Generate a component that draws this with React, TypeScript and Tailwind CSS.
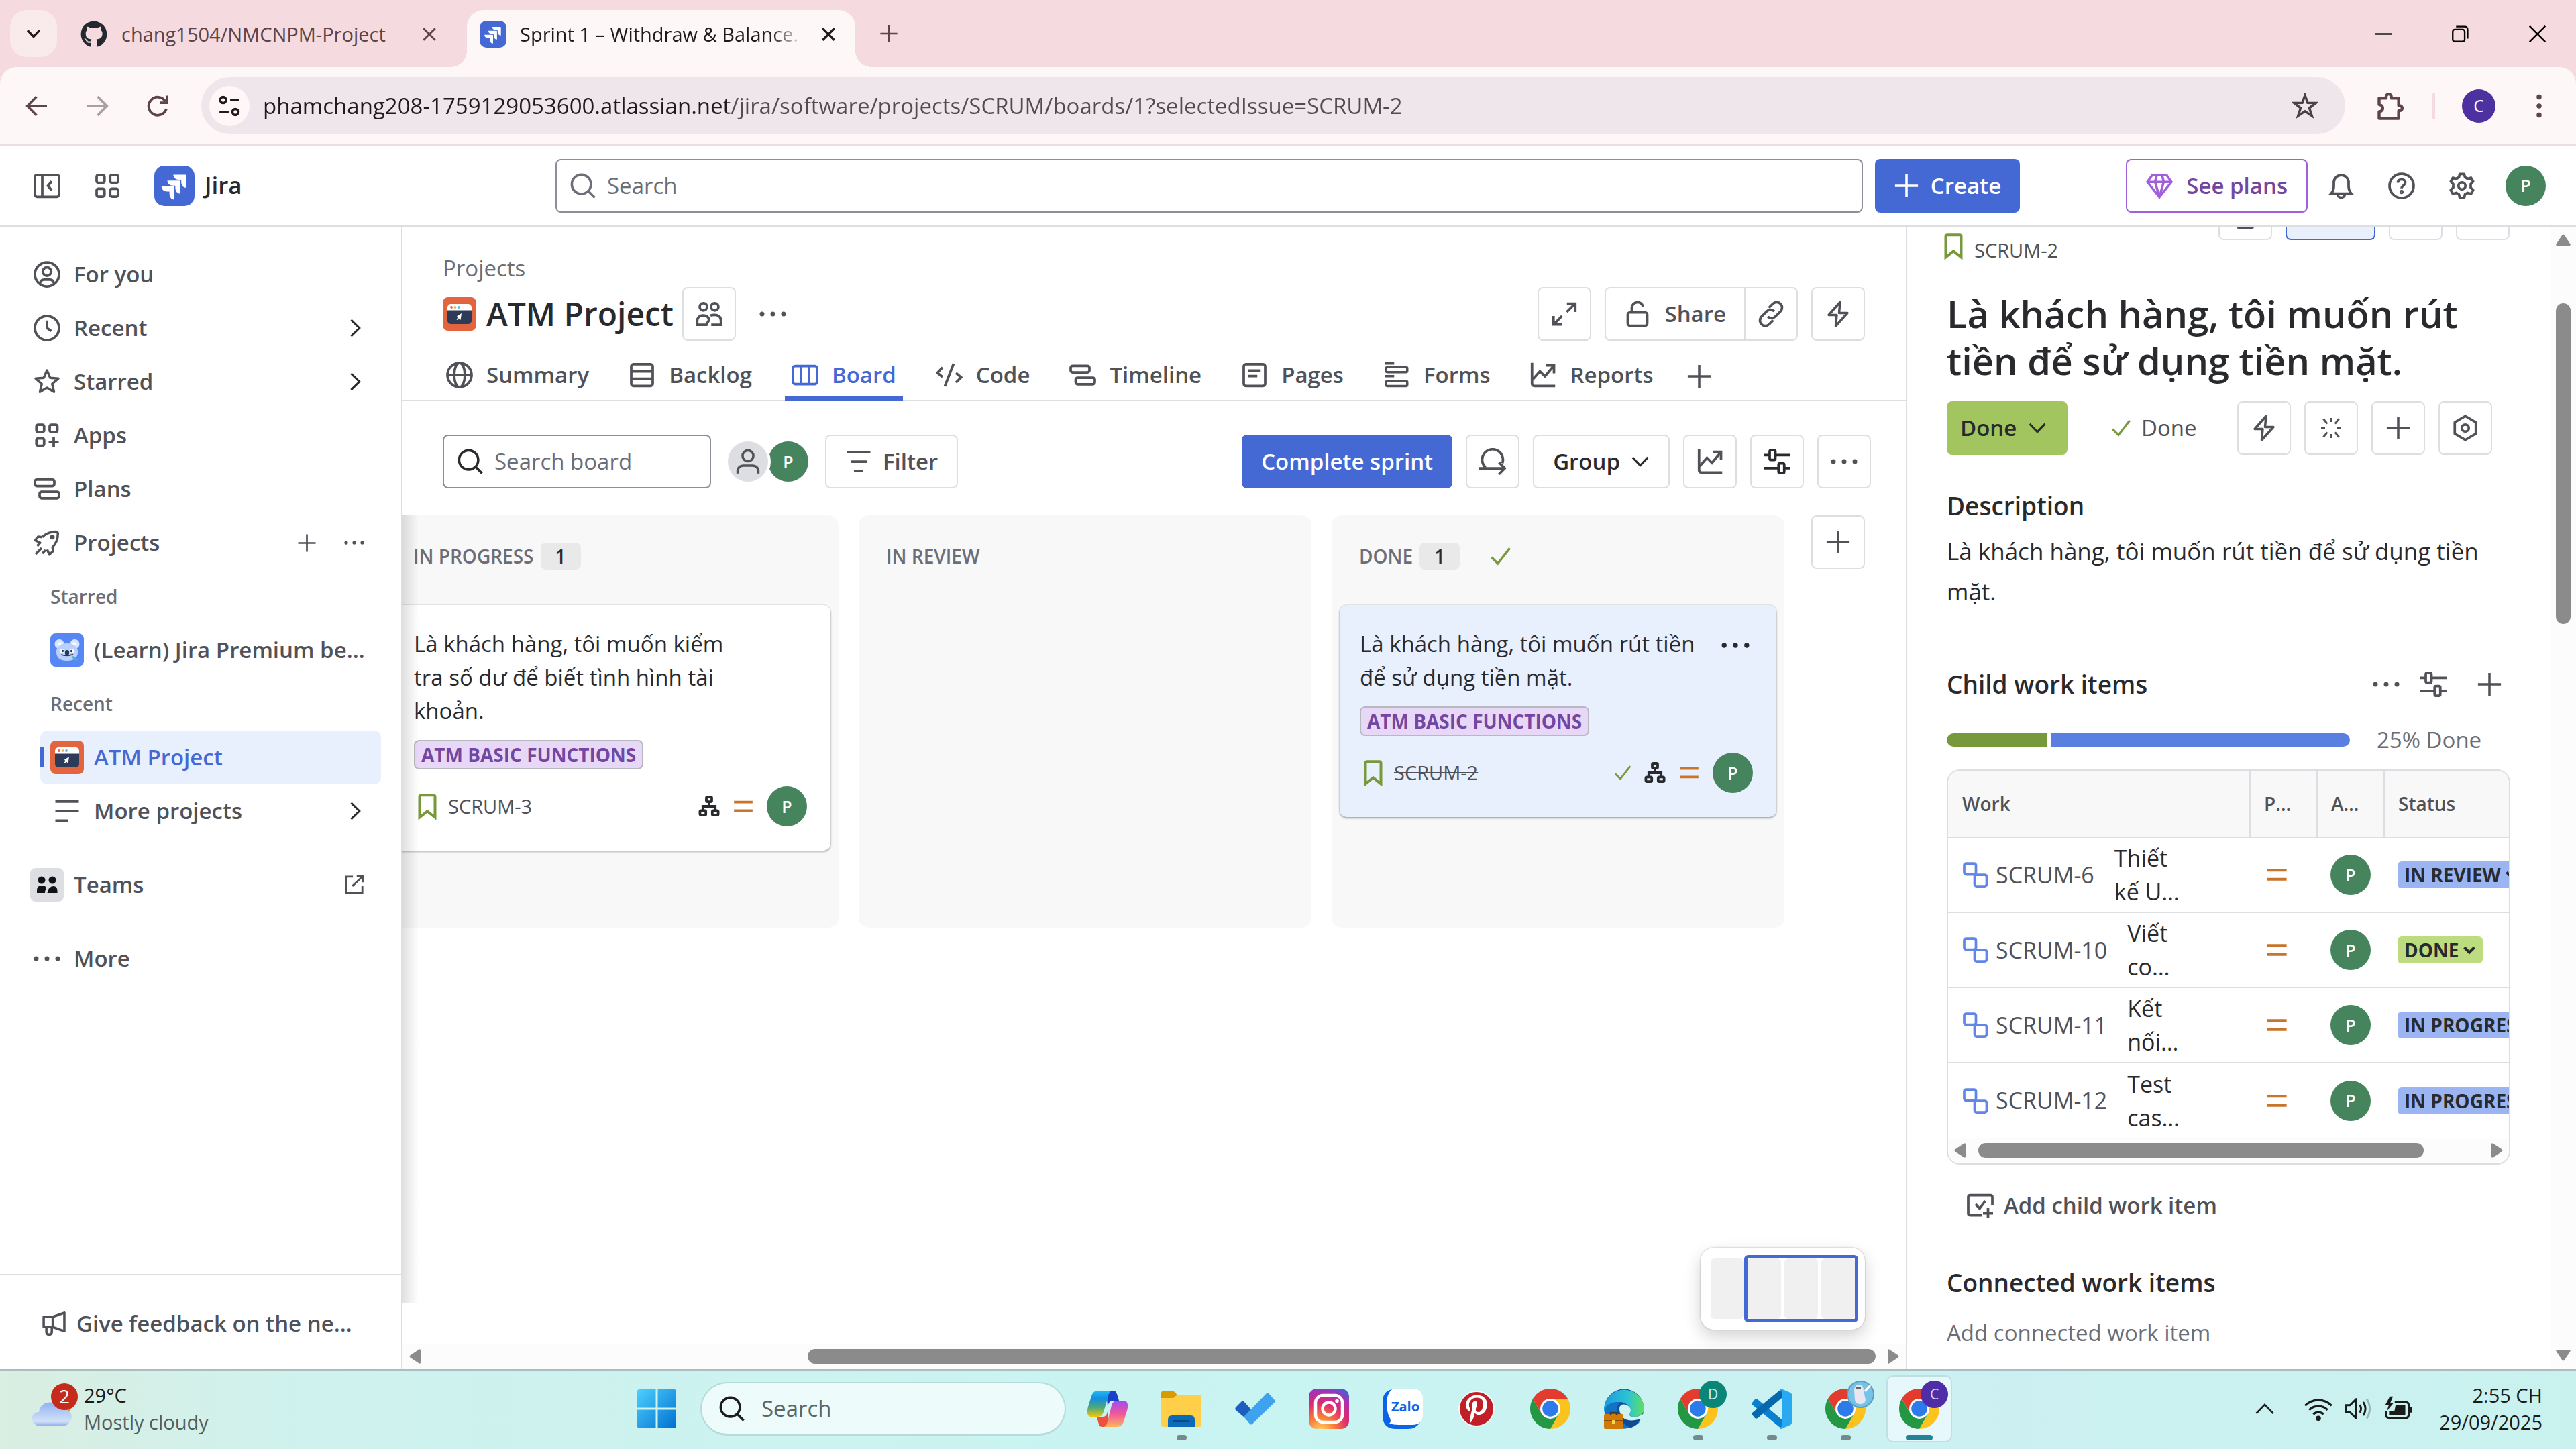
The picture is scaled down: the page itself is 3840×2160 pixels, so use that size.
import React from "react";
import { FaGithub, FaPinterestP } from "react-icons/fa";

type IconProps = { className?: string; children: React.ReactNode; sw?: number };

function Icon({ className = "size-[40px]", children, sw = 1.5 }: IconProps) {
  return (
    <svg viewBox="0 0 16 16" className={`shrink-0 ${className}`} fill="none" stroke="currentColor" strokeWidth={sw} aria-hidden="true">
      {children}
    </svg>
  );
}

const Plus = ({ className }: { className?: string }) => (
  <Icon className={className}><path d="M8 .8v14.4M.8 8h14.4" /></Icon>
);
const Dots = ({ className }: { className?: string }) => (
  <svg viewBox="0 0 16 16" className={`shrink-0 ${className ?? "size-[40px]"}`} fill="currentColor" aria-hidden="true">
    <circle cx="1.6" cy="8" r="1.4" /><circle cx="8" cy="8" r="1.4" /><circle cx="14.4" cy="8" r="1.4" />
  </svg>
);
const Chevron = ({ className }: { className?: string }) => (
  <Icon className={className} sw={1.6}><path d="m5 1.5 6.6 6.5L5 14.5" /></Icon>
);
const ChevronDown = ({ className, sw = 1.7 }: { className?: string; sw?: number }) => (
  <Icon className={className} sw={sw}><path d="m1.5 4.5 6.5 6.8 6.5-6.8" /></Icon>
);
const Check = ({ className }: { className?: string }) => (
  <Icon className={className} sw={1.6}><path d="M1.6 8.8 6 13.2 14.4 2.4" /></Icon>
);
const Search = ({ className }: { className?: string }) => (
  <Icon className={className}><circle cx="7" cy="7" r="6" /><path d="m11.2 11.2 4.2 4.2" /></Icon>
);
const Bolt = () => (
  <Icon sw={1.4}><path d="M9.2.9 2.4 8.6h4.8l-.6 6.6L13.6 7.4H8.6z" strokeLinejoin="round" /></Icon>
);
const Sliders = () => (
  <Icon><path d="M0 4.1h3.6M7.4 4.1H16M0 11.9h8.6M12.4 11.9H16" /><rect x="3.6" y="1.2" width="3.4" height="5.8" rx=".8" /><rect x="8.9" y="9" width="3.4" height="5.8" rx=".8" /></Icon>
);
const ChartLine = () => (
  <Icon><path d="M1.5.7v12.3c0 .9.6 1.5 1.5 1.5h12.3M1.8 10.8l4.4-5 3 3 5-6M10 2.2h4.6v4.8" /></Icon>
);
const Equals = ({ className }: { className?: string }) => (
  <Icon className={className} sw={1.7}><path d="M1.5 5h13M1.5 11h13" /></Icon>
);
const Bookmark = () => (
  <Icon className="size-[40px] text-[#77983b]" sw={1.6}><path d="M3.4 14.6V2.2c0-.5.4-.9.9-.9h7.4c.5 0 .9.4.9.9v12.4L8 10.9z" /></Icon>
);
const Tree = () => (
  <Icon className="size-[32px] text-[#292a2e]" sw={1.9}>
    <rect x="6" y="1" width="4" height="3.6" rx=".8" /><rect x="1.2" y="11.2" width="4.4" height="3.4" rx=".8" /><rect x="10.4" y="11.2" width="4.4" height="3.4" rx=".8" /><path d="M8 4.6v3.2M3.4 11V8h9.2v3" />
  </Icon>
);
const Subtask = () => (
  <Icon className="size-[40px] text-[#6087e8]">
    <rect x="1.2" y="1.2" width="7" height="6.6" rx="1.2" /><rect x="7.4" y="8" width="7.2" height="6.8" rx="1.2" />
  </Icon>
);

function JiraLogo({ className }: { className: string }) {
  return (
    <svg viewBox="0 0 24 24" className={`shrink-0 ${className}`} aria-hidden="true">
      <rect width="24" height="24" rx="6" fill="#4569d4" />
      <path fill="#fff" d="M9.051 15.434H7.734c-1.988 0-3.413-1.218-3.413-3h7.085c.367 0 .605.26.605.63v7.13c-1.772 0-2.96-1.435-2.96-3.434zm3.5-3.543h-1.318c-1.987 0-3.413-1.196-3.413-2.978h7.085c.367 0 .627.239.627.608v7.13c-1.772 0-2.981-1.435-2.981-3.434zm3.52-3.522h-1.317c-1.987 0-3.413-1.217-3.413-3h7.085c.367 0 .605.262.605.61v7.129c-1.771 0-2.96-1.435-2.96-3.434z" />
    </svg>
  );
}

function AtmLogo() {
  return (
    <svg viewBox="0 0 50 50" className="size-[50px] shrink-0" aria-hidden="true">
      <rect width="50" height="50" rx="8" fill="#e2653f" />
      <rect x="7" y="10" width="36" height="30" rx="5" fill="#2e3b58" />
      <path d="M7 19.5v-4.5a5 5 0 0 1 5-5h26a5 5 0 0 1 5 5v4.5z" fill="#fff" />
      <circle cx="13" cy="15" r="1.9" fill="#e2653f" /><circle cx="18.5" cy="15" r="1.9" fill="#f3b640" /><circle cx="24" cy="15" r="1.9" fill="#5fb8dc" />
      <path d="m28 24-1.5 10-2.5-2.5-2.5 2.5-1-1 2-2.5-1.5-2z" fill="#fff" />
    </svg>
  );
}

function KoalaLogo() {
  return (
    <svg viewBox="0 0 50 50" className="size-[50px] shrink-0" aria-hidden="true">
      <rect width="50" height="50" rx="8" fill="#5687f5" />
      <circle cx="13.5" cy="16" r="7" fill="#d7e5fd" /><circle cx="36.5" cy="16" r="7" fill="#d7e5fd" />
      <circle cx="14.5" cy="17" r="3.5" fill="#fff" /><circle cx="35.5" cy="17" r="3.5" fill="#fff" />
      <path d="M9 28c0-9 6-13 16-13s16 4 16 13-6 13-16 13S9 37 9 28z" fill="#b9d1fa" />
      <circle cx="18" cy="26.5" r="3.2" fill="#fff" /><circle cx="32" cy="26.5" r="3.2" fill="#fff" />
      <circle cx="18.5" cy="26.5" r="1.7" fill="#253858" /><circle cx="31.5" cy="26.5" r="1.7" fill="#253858" />
      <rect x="22" y="25" width="6" height="8" rx="3" fill="#253858" />
      <path d="M16 32q9 3 18-.5" stroke="#253858" strokeWidth="1.5" fill="none" />
      <path d="M32 34q7 0 9 7-7 0-9-7z" fill="#45b5c4" />
    </svg>
  );
}

function Avatar({ className = "" }: { className?: string }) {
  return (
    <span className={`flex size-[60px] shrink-0 items-center justify-center rounded-full bg-[#46845d] text-[25px] leading-none font-semibold text-white ${className}`}>P</span>
  );
}

function Arrow({ dir }: { dir: "left" | "right" | "up" | "down" }) {
  const d = {
    left: "M18 3v18q0 3-3 1L3 14q-3-2 0-4L15 2q3-2 3 1z",
    right: "M6 3v18q0 3 3 1l12-8q3-2 0-4L9 2Q6 0 6 3z",
    up: "M3 20h18q3 0 1-3L14 5q-2-3-4 0L2 17q-2 3 1 3z",
    down: "M3 4h18q3 0 1 3l-8 12q-2 3-4 0L2 7Q0 4 3 4z",
  }[dir];
  return (
    <svg viewBox="0 0 24 24" className="size-[24px] shrink-0" fill="#8b8b8b" aria-hidden="true"><path d={d} /></svg>
  );
}

function SquareButton({ label, children, className = "text-[#505258]" }: { label: string; children: React.ReactNode; className?: string }) {
  return (
    <button aria-label={label} className={`flex size-[80px] shrink-0 items-center justify-center rounded-[8px] border-2 border-[#dddee1] bg-white ${className}`}>
      {children}
    </button>
  );
}

function BrowserChrome() {
  return (
    <div className="bg-[#f5dadf]">
      <div className="flex h-[100px] items-stretch">
        <button aria-label="Search tabs" className="mt-[15px] ml-[15px] flex size-[70px] items-center justify-center rounded-[25px] bg-[#f9ebec] text-[#201a1b]">
          <ChevronDown className="size-[22px]" sw={2.4} />
        </button>
        <div className="flex w-[601px] items-center pt-[2px] pl-[35px] text-[29px] text-[#5c4448]">
          <FaGithub className="size-[40px] shrink-0 text-[#24292f]" />
          <span className="ml-[21px] flex-1 whitespace-nowrap">chang1504/NMCNPM-Project</span>
          <button aria-label="Close tab" className="mr-[36px]"><Icon className="size-[20px]" sw={2.2}><path d="m1 1 14 14M15 1 1 15" /></Icon></button>
        </div>
        <div className="relative ml-[10px] mt-[15px] flex w-[579px] items-center rounded-t-[25px] bg-[#fdf7f7] pb-[13px] pl-[19px] text-[29px] text-[#201a1b]">
          <span className="absolute bottom-0 -left-[25px] size-[25px] bg-[radial-gradient(circle_at_0_0,transparent_25px,#fdf7f7_25px)]" />
          <span className="absolute -right-[25px] bottom-0 size-[25px] bg-[radial-gradient(circle_at_100%_0,transparent_25px,#fdf7f7_25px)]" />
          <JiraLogo className="size-[40px]" />
          <span className="ml-[20px] w-[424px] whitespace-nowrap [mask-image:linear-gradient(90deg,#000_88%,transparent)]">Sprint 1 – Withdraw &amp; Balance.</span>
          <button aria-label="Close tab" className="ml-[26px]"><Icon className="size-[20px]" sw={2.6}><path d="m1 1 14 14M15 1 1 15" /></Icon></button>
        </div>
        <button aria-label="New tab" className="ml-[36px] text-[#5c4448]"><Plus className="size-[28px]" /></button>
        <div className="ml-auto flex text-black">
          <button aria-label="Minimize" className="flex w-[115px] items-center justify-center"><Icon className="size-[25px]"><path d="M0 8h16" /></Icon></button>
          <button aria-label="Restore" className="flex w-[115px] items-center justify-center"><Icon className="size-[25px]"><rect x=".8" y="3.8" width="11.4" height="11.4" rx="2" /><path d="M4 1h8q3 0 3 3v8.5" /></Icon></button>
          <button aria-label="Close" className="flex w-[115px] items-center justify-center"><Icon className="size-[25px]"><path d="m.5.5 15 15M15.5.5l-15 15" /></Icon></button>
        </div>
      </div>
      <div className="flex h-[117px] items-center rounded-t-[25px] border-b-2 border-[#eedde0] bg-[#fdf7f7] pl-[35px] text-[#5c4448]">
        <button aria-label="Back"><Icon sw={1.4}><path d="M14 8H2.5M7.8 2.4 2.3 8l5.5 5.6" /></Icon></button>
        <button aria-label="Forward" className="ml-[50px] text-[#ab9fa1]"><Icon sw={1.4}><path d="M2 8h11.5M8.2 2.4 13.7 8l-5.5 5.6" /></Icon></button>
        <button aria-label="Reload" className="ml-[50px]"><Icon sw={1.5}><path d="M13.2 9.7A5.4 5.4 0 1 1 12.6 5.2M13.6 1.8v4.2H9.4" /></Icon></button>
        <div className="ml-[45px] flex h-[85px] flex-1 items-center rounded-full bg-[#eee6eb] pr-[40px] pl-[12px]">
          <button aria-label="Site information" className="flex size-[60px] shrink-0 items-center justify-center rounded-full bg-[#fdf7f7] text-[#201a1b]">
            <Icon className="size-[34px]" sw={1.7}><circle cx="3.6" cy="3.8" r="2.1" /><path d="M8.5 3.8H15" /><circle cx="12.2" cy="12.2" r="2.1" /><path d="M1 12.2h6.5" /></Icon>
          </button>
          <input
            aria-label="Address"
            defaultValue="phamchang208-1759129053600.atlassian.net/jira/software/projects/SCRUM/boards/1?selectedIssue=SCRUM-2"
            className="ml-[20px] min-w-0 flex-1 bg-[linear-gradient(90deg,#201a1b_692px,#554b4e_692px)] bg-clip-text text-[33px] text-transparent outline-none"
          />
          <button aria-label="Bookmark this page" className="text-[#4c4043]"><Icon sw={1.4}><path d="m8 1.6 1.6 4.5 4.9.1-3.9 3 1.5 4.7L8 11.1l-4.1 2.8 1.5-4.7-3.9-3 4.9-.1z" /></Icon></button>
        </div>
        <button aria-label="Extensions" className="ml-[45px]"><Icon className="size-[44px]" sw={1.6}><path d="M2 3.7h3.8v-.8a1.4 1.4 0 0 1 2.8 0v.8h4v4.1h.5a1.4 1.4 0 0 1 0 2.8h-.5v4.1H2v-3.6c2.6-.4 2.6-3.5 0-3.9z" strokeLinejoin="round" /></Icon></button>
        <span className="ml-[41px] h-[40px] w-[4px] rounded bg-[#f5dadf]" />
        <button className="ml-[40px] flex size-[50px] items-center justify-center rounded-full bg-[#4d31a0] text-[25px] text-white">C</button>
        <button aria-label="Menu" className="mr-[35px] ml-[45px]">
          <svg viewBox="0 0 16 16" className="size-[40px]" fill="currentColor"><circle cx="8" cy="2.6" r="1.5" /><circle cx="8" cy="8" r="1.5" /><circle cx="8" cy="13.4" r="1.5" /></svg>
        </button>
      </div>
    </div>
  );
}

function TopBar() {
  return (
    <header className="flex h-[121px] items-center border-b-2 border-[#dddee1] text-[33px] text-[#505258]">
      <div className="flex w-[828px] shrink-0 items-center pl-[50px]">
        <button aria-label="Collapse sidebar"><Icon><rect x=".75" y="1.5" width="14.5" height="13" rx="1.3" /><path d="M5.2 1.5v13M10.8 5.3 8.6 8l2.2 2.7" /></Icon></button>
        <button aria-label="Switch apps" className="ml-[50px]"><Icon><rect x="1.6" y="1.5" width="4.7" height="4.7" rx="1" /><rect x="9.7" y="1.5" width="4.7" height="4.7" rx="1" /><rect x="1.6" y="9.7" width="4.7" height="4.7" rx="1" /><rect x="9.7" y="9.7" width="4.7" height="4.7" rx="1" /></Icon></button>
        <a href="#home" className="ml-[50px] flex items-center gap-[15px] text-[35px] font-semibold text-[#292a2e]"><JiraLogo className="size-[60px]" />Jira</a>
      </div>
      <label className="flex h-[80px] flex-1 items-center rounded-[8px] border-2 border-[#8c8f97] pl-[20px] text-[#6b6e76]">
        <Search className="size-[38px]" />
        <input aria-label="Search" placeholder="Search" className="ml-[17px] min-w-0 flex-1 outline-none placeholder:text-[#6b6e76]" />
      </label>
      <button className="ml-[18px] flex h-[80px] w-[216px] items-center justify-center gap-[17px] rounded-[8px] bg-[#4569d4] font-semibold text-white"><Plus className="size-[38px]" />Create</button>
      <div className="flex w-[829px] shrink-0 items-center justify-end pr-[45px]">
        <button className="mr-[30px] flex h-[80px] items-center gap-[20px] rounded-[8px] border-2 border-[#a25fdc] px-[28px] font-semibold text-[#74479f]">
          <Icon className="size-[40px] text-[#a25fdc]" sw={1.4}><path d="M3.8 1.5h8.4l3 4.2L8 14.7.8 5.7zM.8 5.7h14.4M5.4 5.7 8 14.5l2.6-8.8M5.4 5.7l1-4M10.6 5.7l-1-4" /></Icon>
          See plans
        </button>
        <button aria-label="Notifications"><Icon><path d="M2 12.6c.9-1 1.6-2.4 1.6-4.3V6a4.4 4.4 0 0 1 8.8 0v2.3c0 1.9.7 3.3 1.6 4.3zM5.8 12.8a2.2 2.2 0 0 0 4.4 0" /></Icon></button>
        <button aria-label="Help" className="ml-[50px]"><Icon><circle cx="8" cy="8" r="7.2" /><path d="M5.8 6.2c0-1.3 1-2.1 2.2-2.1s2.2.8 2.2 2c0 1.7-2.2 1.7-2.2 3.4" /><circle cx="8" cy="11.6" r=".5" /></Icon></button>
        <button aria-label="Settings" className="ml-[50px]"><Icon><path d="M6.7.9h2.6l.5 2 1.6.9 2-.6 1.3 2.3-1.5 1.4v2.2l1.5 1.4-1.3 2.3-2-.6-1.6.9-.5 2H6.7l-.5-2-1.6-.9-2 .6-1.3-2.3 1.5-1.4V6.9L1.3 5.5l1.3-2.3 2 .6 1.6-.9z" strokeLinejoin="round" /><circle cx="8" cy="8" r="2.1" /></Icon></button>
        <button aria-label="Profile" className="ml-[45px]"><Avatar /></button>
      </div>
    </header>
  );
}

function NavRow({ icon, label, trailing }: { icon: React.ReactNode; label: string; trailing?: React.ReactNode }) {
  return (
    <li className="flex h-[80px] items-center pr-[19px] pl-[20px]">
      <a href="#nav" className="flex flex-1 items-center gap-[20px]"><span className="flex w-[40px] justify-center">{icon}</span>{label}</a>
      {trailing}
    </li>
  );
}

const rightChevron = <Chevron className="mr-[5px] size-[30px] text-[#292a2e]" />;

function Sidebar() {
  return (
    <aside className="flex w-[600px] shrink-0 flex-col border-r-2 border-[#dddee1] text-[33px] font-semibold text-[#505258]">
      <nav className="flex-1 px-[30px] pt-[31px]">
        <ul>
          <NavRow label="For you" icon={<Icon><circle cx="8" cy="8" r="7.2" /><circle cx="8" cy="6.3" r="2.5" /><path d="M3.8 13.6c.2-1.7 1.1-2.5 2.6-2.5h3.2c1.5 0 2.4.8 2.6 2.5" /></Icon>} />
          <NavRow label="Recent" trailing={rightChevron} icon={<Icon><circle cx="8" cy="8" r="7.2" /><path d="M8 3.5V8l2.6 1.8" /></Icon>} />
          <NavRow label="Starred" trailing={rightChevron} icon={<Icon sw={1.4}><path d="m8 1.2 1.9 4.5 4.9.4-3.7 3.2 1.1 4.8L8 11.6l-4.2 2.5 1.1-4.8L1.2 6.1l4.9-.4z" strokeLinejoin="round" /></Icon>} />
          <NavRow label="Apps" icon={<Icon><rect x="1.7" y="1.6" width="4.6" height="4.4" rx="1" /><rect x="9.6" y="1.6" width="4.6" height="4.4" rx="1" /><rect x="1.7" y="9.8" width="4.6" height="4.4" rx="1" /><path d="M12 9v6M9 12h6" /></Icon>} />
          <NavRow label="Plans" icon={<Icon><rect x=".8" y="2.3" width="11.6" height="3.9" rx="1.2" /><rect x="3.6" y="9.6" width="11.6" height="3.9" rx="1.2" /></Icon>} />
          <NavRow
            label="Projects"
            icon={<Icon sw={1.4}><path d="M5.2 4.7c2-2 4.2-3.3 8-3.3.9 0 1.3.5 1.3 1.3 0 3.8-1.2 6-3.2 8l.3 2.4-2.2 2-1.3-3M5.2 4.7 2.7 4.4.9 6.6l3 1.4-1.7 2M1.2 14.8l3.6-3.6M5.2 14.4l2-2" strokeLinejoin="round" /><circle cx="11.2" cy="4.7" r=".7" /></Icon>}
            trailing={<span className="flex items-center gap-[41px]"><button aria-label="Create project"><Plus className="size-[29px]" /></button><button aria-label="More project actions" className="mr-[6px]"><Dots className="size-[30px]" /></button></span>}
          />
        </ul>
        <p className="flex h-[80px] items-center pl-[45px] text-[28px] text-[#6b6e76]">Starred</p>
        <a href="#learn" className="flex h-[80px] items-center pl-[45px] whitespace-nowrap"><KoalaLogo /><span className="ml-[15px]">(Learn) Jira Premium be…</span></a>
        <p className="flex h-[80px] items-center pl-[45px] text-[28px] text-[#6b6e76]">Recent</p>
        <a href="#atm" className="ml-[30px] flex h-[80px] items-center rounded-[10px] bg-[#e9f0fd] text-[#4569d4]">
          <span className="h-[30px] w-[5px] bg-[#4569d4]" /><span className="ml-[10px]"><AtmLogo /></span><span className="ml-[15px]">ATM Project</span>
        </a>
        <a href="#projects" className="flex h-[80px] items-center pr-[19px] pl-[50px]">
          <Icon><path d="M1 2.3h14M1 8h14M1 13.7h7.5" /></Icon><span className="ml-[20px] flex-1">More projects</span>{rightChevron}
        </a>
        <a href="#teams" className="mt-[30px] flex h-[80px] items-center pr-[25px] pl-[15px]">
          <svg viewBox="0 0 50 50" className="size-[50px]" aria-hidden="true"><rect width="50" height="50" rx="8" fill="#dddee1" /><circle cx="17" cy="18" r="5.5" fill="#101214" /><circle cx="33" cy="18" r="5.5" fill="#101214" /><path d="M10 37v-4q0-7 7-7t7 5q-2 2-2 6zM25.5 37q1-6 4-8 2-2 5-2 6 0 6 7v3z" fill="#101214" /></svg>
          <span className="ml-[15px] flex-1">Teams</span>
          <Icon className="size-[30px]"><path d="M7 1.5H1.5v13h13V9M10 1.3h4.7V6M14.5 1.5 6.5 9" /></Icon>
        </a>
        <a href="#more" className="mt-[30px] flex h-[80px] items-center gap-[20px] pl-[20px]"><Dots />More</a>
      </nav>
      <a href="#feedback" className="flex h-[141px] items-center gap-[14px] border-t-2 border-[#dddee1] pt-[4px] pl-[62px] whitespace-nowrap">
        <Icon className="size-[38px]"><path d="M1.3 3.8H7v6.4H1.3zM7 3.8l7.3-2.6v11.6L7 10.2M3 10.2v3.2c0 2 3.4 2 3.4 0v-3.2" strokeLinejoin="round" /></Icon>
        <span>Give feedback on the ne…</span>
      </a>
    </aside>
  );
}

const viewTabs: { label: string; icon: React.ReactNode; active?: boolean }[] = [
  { label: "Summary", icon: <Icon><circle cx="8" cy="8" r="7.2" /><ellipse cx="8" cy="8" rx="3.2" ry="7.2" /><path d="M.8 8h14.4" /></Icon> },
  { label: "Backlog", icon: <Icon><rect x="1.6" y="1.5" width="12.8" height="13" rx="1.3" /><path d="M1.6 5.8h12.8M1.6 10.2h12.8" /></Icon> },
  { label: "Board", active: true, icon: <Icon><rect x=".8" y="2.6" width="14.4" height="10.8" rx="1.3" /><path d="M5.6 2.6v10.8M10.4 2.6v10.8" /></Icon> },
  { label: "Code", icon: <Icon><path d="M4 3.5.9 6.7 4 9.2M12 6.8l3.1 2.6L12 12.5M10.6 1.3 5.4 14.7" /></Icon> },
  { label: "Timeline", icon: <Icon><rect x=".8" y="2.5" width="11.2" height="3.9" rx="1.2" /><rect x="3.8" y="9.6" width="11.4" height="3.9" rx="1.2" /></Icon> },
  { label: "Pages", icon: <Icon><rect x="1.6" y="1.5" width="12.8" height="13" rx="1.3" /><path d="M4.3 5.3h7.4M4.3 8.6h5.4" /></Icon> },
  { label: "Forms", icon: <Icon sw={1.4}><path d="M1 1.1h5.5M1 8.7h5.5" /><rect x="1.7" y="3.3" width="12.6" height="3" rx=".8" /><rect x="1.7" y="11.6" width="12.6" height="3" rx=".8" /></Icon> },
  { label: "Reports", icon: <ChartLine /> },
];

function Tag() {
  return <span className="inline-flex h-[44px] items-center rounded-[8px] border-2 border-[#b7b9be] bg-[#e8d8f7] px-[9px] text-[28px] font-bold text-[#7346a2]">ATM BASIC FUNCTIONS</span>;
}

function Card({ text, id, done }: { text: string; id: string; done?: boolean }) {
  return (
    <article className={`mx-[12px] flex flex-col items-start rounded-[10px] px-[30px] pt-[33px] pb-[36px] shadow-[0_2px_3px_rgba(30,31,33,0.3),0_0_2px_rgba(30,31,33,0.3)] ${done ? "bg-[#e9f0fd]" : "bg-white"}`}>
      <div className="flex self-stretch">
        <p className="w-[510px] text-[33px] leading-[50px] text-[#292a2e]">{text}</p>
        {done && <button aria-label="Card actions" className="mt-[6px] ml-auto self-start pr-[10px] text-[#292a2e]"><Dots className="size-[42px]" /></button>}
      </div>
      <div className="mt-[18px] flex"><Tag /></div>
      <div className="mt-[25px] flex items-center self-stretch pr-[5px]">
        <Bookmark />
        <a href="#issue" className={`ml-[11px] text-[29px] text-[#505258] ${done ? "line-through" : ""}`}>{id}</a>
        <span className="ml-auto flex items-center gap-[18px]">
          {done && <Check className="size-[28px] text-[#77983b]" />}
          <Tree /><Equals className="size-[34px] text-[#c97429]" /><Avatar />
        </span>
      </div>
    </article>
  );
}

function Column({ title, count, done, children }: { title: string; count?: number; done?: boolean; children?: React.ReactNode }) {
  return (
    <section className="h-[615px] w-[675px] shrink-0 rounded-[15px] bg-[#f8f8f8]">
      <h2 className="flex h-[134px] items-center pb-[13px] pl-[41px] text-[28px] font-semibold text-[#6b6e76]">
        {title}
        {count !== undefined && <span className="ml-[10px] flex h-[40px] w-[60px] items-center justify-center rounded-[8px] bg-[#e9e9ea] text-[#292a2e]">{count}</span>}
        {done && <Check className="ml-[44px] size-[34px] text-[#77983b]" />}
      </h2>
      {children}
    </section>
  );
}

function Board() {
  return (
    <main className="relative flex min-w-0 flex-1 flex-col text-[33px] text-[#505258]">
      <div className="flex h-[260px] flex-col border-b-2 border-[#dddee1]">
        <a href="#projects" className="mt-[37px] ml-[60px] self-start leading-[50px] text-[#6b6e76]">Projects</a>
        <div className="mt-[3px] flex h-[80px] items-center pr-[61px] pl-[60px]">
          <AtmLogo />
          <h1 className="ml-[15px] text-[48px] font-semibold text-[#292a2e]">ATM Project</h1>
          <span className="ml-[13px]"><SquareButton label="Teams"><Icon><circle cx="4.6" cy="3.7" r="2.2" /><circle cx="11.4" cy="3.7" r="2.2" /><path d="M7 14.4H.9v-2c0-2 1.3-3.6 3.5-3.6s3.5 1.2 3.5 2.6-1.3 1.4-1.3 3M8.8 8.9c.7-.3 1.5-.4 2.6-.4 2.3 0 3.7 1.4 3.7 3.6v2.3H9.3" /></Icon></SquareButton></span>
          <button aria-label="More actions" className="ml-[35px]"><Dots /></button>
          <div className="ml-auto flex gap-[20px]">
            <SquareButton label="Full screen"><Icon><path d="M9.5 1.8h5v5M14.2 2 9.4 6.8M6.5 14.2h-5v-5M1.8 14l4.8-4.8" /></Icon></SquareButton>
            <div className="flex h-[80px] rounded-[8px] border-2 border-[#dddee1]">
              <button className="flex items-center gap-[20px] border-r-2 border-[#dddee1] px-[27px] font-semibold"><Icon><rect x="2.2" y="7" width="11.6" height="8" rx="1.3" /><path d="M4.6 7V4.2A3.4 3.4 0 0 1 11.3 3.6" /></Icon>Share</button>
              <button aria-label="Copy link" className="px-[18px]"><Icon><path d="m6.7 4.3 2.4-2.4a3.2 3.2 0 0 1 4.6 0c1.2 1.2 1.2 3.2 0 4.5L10.5 9.6c-1.2 1.2-3.1 1.3-4.4 0M9.3 11.7l-2.4 2.4a3.2 3.2 0 0 1-4.6 0c-1.2-1.2-1.2-3.2 0-4.5l3.2-3.2c1.2-1.2 3.1-1.3 4.4 0" /></Icon></button>
            </div>
            <SquareButton label="Automation"><Bolt /></SquareButton>
          </div>
        </div>
        <nav className="mt-[18px] flex flex-1 gap-[39px] pl-[55px] font-semibold">
          {viewTabs.map((t) => (
            <a key={t.label} href="#view" className={`-mb-[2px] flex items-center gap-[20px] border-b-[7px] px-[10px] ${t.active ? "border-[#4569d4] text-[#4569d4]" : "border-transparent"}`}>{t.icon}{t.label}</a>
          ))}
          <button aria-label="Add view"><Plus className="size-[38px]" /></button>
        </nav>
      </div>

      <div className="mt-[50px] flex h-[80px] items-center pr-[52px] pl-[60px]">
        <label className="flex h-[80px] w-[400px] items-center rounded-[8px] border-2 border-[#8c8f97] pl-[20px] text-[#292a2e]">
          <Search className="size-[38px]" />
          <input aria-label="Search board" placeholder="Search board" className="ml-[17px] w-[300px] outline-none placeholder:text-[#6b6e76]" />
        </label>
        <span className="z-10 ml-[25px] flex size-[60px] items-center justify-center rounded-full bg-[#dddee1] ring-4 ring-white"><Icon className="size-[38px]"><circle cx="8" cy="4.4" r="3.4" /><path d="M1.5 15.5v-1.2c0-2.4 1.5-3.8 3.8-3.8h5.4c2.3 0 3.8 1.4 3.8 3.8v1.2" /></Icon></span>
        <Avatar />
        <button className="ml-[25px] flex h-[80px] items-center gap-[16px] rounded-[8px] border-2 border-[#dddee1] px-[28px] font-semibold"><Icon><path d="M1 2.4h14M3.2 8h9.6M5.2 13.5h5.6" /></Icon>Filter</button>
        <div className="ml-auto flex items-center gap-[20px]">
          <button className="h-[80px] rounded-[8px] bg-[#4569d4] px-[29px] font-semibold text-white">Complete sprint</button>
          <SquareButton label="Sprint details"><Icon><path d="M3.8 11.5A6.2 6.2 0 1 1 13.8 9M0 12h15M11.8 8.5l3.4 3.5-3.4 3.5" /></Icon></SquareButton>
          <button className="flex h-[80px] items-center gap-[16px] rounded-[8px] border-2 border-[#dddee1] px-[28px] font-semibold text-[#292a2e]">Group<ChevronDown className="size-[28px]" /></button>
          <SquareButton label="Insights"><ChartLine /></SquareButton>
          <SquareButton label="View settings" className="text-[#292a2e]"><Sliders /></SquareButton>
          <SquareButton label="More"><Dots /></SquareButton>
        </div>
      </div>

      <div className="relative mt-[40px] flex flex-1 overflow-hidden">
        <div className="-ml-[25px] flex flex-1 items-start gap-[30px]">
          <Column title="IN PROGRESS" count={1}><Card id="SCRUM-3" text="Là khách hàng, tôi muốn kiểm tra số dư để biết tình hình tài khoản." /></Column>
          <Column title="IN REVIEW" />
          <Column title="DONE" count={1} done><Card id="SCRUM-2" done text="Là khách hàng, tôi muốn rút tiền để sử dụng tiền mặt." /></Column>
          <span className="ml-[10px]"><SquareButton label="Create column"><Plus className="size-[38px]" /></SquareButton></span>
        </div>
        <div className="absolute top-0 bottom-[60px] left-0 w-[24px] bg-linear-to-r from-black/12 to-transparent" />
      </div>

      <div className="absolute right-[61px] bottom-[58px] z-10 flex h-[122px] gap-[5px] rounded-[20px] bg-white px-[15px] py-[16px] shadow-[0_10px_25px_rgba(30,31,33,0.2),0_0_2px_rgba(30,31,33,0.4)]">
        {[0, 1, 2, 3].map((i) => <span key={i} className="w-[50px] rounded-[6px] bg-[#f0f0f1]" />)}
        <span className="absolute top-[11px] right-[10px] h-[100px] w-[170px] rounded-[6px] border-[5px] border-[#4569d4]" />
      </div>

      <div className="flex h-[37px] items-center bg-[#fcfcfc] px-[9px]">
        <Arrow dir="left" />
        <div className="flex flex-1 justify-end px-[12px]"><span className="h-[22px] w-[74%] rounded-full bg-[#8b8b8b]" /></div>
        <Arrow dir="right" />
      </div>
    </main>
  );
}

const childItems = [
  { id: "SCRUM-6", text: "Thiết kế U…", status: "IN REVIEW" },
  { id: "SCRUM-10", text: "Viết co…", status: "DONE" },
  { id: "SCRUM-11", text: "Kết nối…", status: "IN PROGRESS" },
  { id: "SCRUM-12", text: "Test cas…", status: "IN PROGRESS" },
];

function DetailPanel() {
  return (
    <aside className="flex w-[999px] shrink-0 border-l-2 border-[#dddee1] text-[33px] text-[#505258]">
      <div className="min-w-0 flex-1 pr-[60px] pl-[59px]">
        <div className="flex h-[50px] justify-between">
          <div className="flex items-end gap-[11px] text-[29px]"><span className="-ml-[10px] pb-[1px]"><Bookmark /></span><a href="#issue" className="leading-[30px]">SCRUM-2</a></div>
          <div className="flex gap-[20px] text-[#505258]">
            <button aria-label="Lock" className="flex h-[20px] w-[80px] justify-center rounded-b-[8px] border-2 border-t-0 border-[#dddee1]"><span className="h-[3px] w-[26px] rounded-b bg-[#505258]" /></button>
            <button aria-label="Watch" className="h-[20px] w-[134px] rounded-b-[8px] border-2 border-t-0 border-[#4569d4] bg-[#e9f0fd]" />
            <button aria-label="Share" className="h-[20px] w-[80px] rounded-b-[8px] border-2 border-t-0 border-[#dddee1]" />
            <button aria-label="Actions" className="mr-px h-[20px] w-[80px] rounded-b-[8px] border-2 border-t-0 border-[#dddee1]" />
          </div>
        </div>
        <h2 className="mt-[44px] text-[56px] leading-[70px] font-semibold text-[#292a2e]">Là khách hàng, tôi muốn rút tiền để sử dụng tiền mặt.</h2>
        <div className="mt-[26px] flex items-center">
          <button className="flex h-[80px] w-[180px] items-center gap-[17px] rounded-[8px] bg-[#a2c55f] pl-[20px] font-semibold text-[#292a2e]">Done<ChevronDown className="size-[28px]" /></button>
          <span className="ml-[64px] flex flex-1 items-center gap-[14px]"><Check className="size-[32px] text-[#77983b]" />Done</span>
          <div className="mr-[27px] flex gap-[20px]">
            <SquareButton label="Automation"><Bolt /></SquareButton>
            <SquareButton label="Improve"><Icon className="size-[32px]"><path d="M8 .5v3M8 12.5v3M.5 8h3M12.5 8h3M2.2 1.2l2.9 3.6M13.8 1.2l-2.9 3.6M2.2 14.8l2.9-3.6M13.8 14.8l-2.9-3.6" /></Icon></SquareButton>
            <SquareButton label="Add"><Plus className="size-[38px]" /></SquareButton>
            <SquareButton label="Apps"><Icon><path d="m8 .9 6.3 3.7v6.8L8 15.1l-6.3-3.7V4.6z" strokeLinejoin="round" /><circle cx="8" cy="8" r="2.1" /></Icon></SquareButton>
          </div>
        </div>
        <h3 className="mt-[51px] text-[37px] leading-[50px] font-semibold text-[#292a2e]">Description</h3>
        <p className="mt-[13px] text-[35px] leading-[60px] text-[#292a2e]">Là khách hàng, tôi muốn rút tiền để sử dụng tiền mặt.</p>
        <div className="mt-[80px] flex h-[56px] items-center">
          <h3 className="flex-1 text-[37px] leading-[50px] font-semibold text-[#292a2e]">Child work items</h3>
          <button aria-label="More"><Dots /></button>
          <button aria-label="View settings" className="ml-[30px]"><Sliders /></button>
          <button aria-label="Add child" className="mr-[12px] ml-[45px]"><Plus className="size-[38px]" /></button>
        </div>
        <div className="mt-[30px] flex h-[50px] items-center">
          <div className="flex h-[20px] w-[601px] gap-[5px] overflow-hidden rounded-full"><span className="w-1/4 bg-[#77983b]" /><span className="flex-1 bg-[#5980e0]" /></div>
          <span className="ml-[40px] text-[#6b6e76]">25% Done</span>
        </div>
        <div className="mt-[19px] overflow-hidden rounded-[20px] border-2 border-[#dddee1]">
          <table className="w-[1040px] table-fixed border-collapse text-left">
            <thead className="bg-[#f8f8f8] text-[28px]">
              <tr className="h-[99px] border-b-2 border-[#dddee1]">
                <th className="w-[450px] border-r-2 border-[#dddee1] pl-[21px] font-semibold">Work</th>
                <th className="w-[100px] border-r-2 border-[#dddee1] pl-[20px] font-semibold">P…</th>
                <th className="w-[100px] border-r-2 border-[#dddee1] pl-[20px] font-semibold">A…</th>
                <th className="pl-[20px] font-semibold">Status</th>
              </tr>
            </thead>
            <tbody className="text-[34px]">
              {childItems.map((c) => (
                <tr key={c.id} className="h-[112px] border-b-2 border-[#dddee1] last:border-b-0">
                  <td className="pl-[21px]">
                    <div className="flex items-center">
                      <Subtask /><a href="#child" className="ml-[10px] whitespace-nowrap">{c.id}</a>
                      <span className="ml-[30px] w-[106px] leading-[50px] text-[#292a2e]">{c.text}</span>
                    </div>
                  </td>
                  <td className="pl-[22px]"><Equals className="size-[36px] text-[#c97429]" /></td>
                  <td className="pl-[20px]"><Avatar /></td>
                  <td className="pl-[20px]">
                    <button className={`flex h-[40px] items-center gap-[6px] rounded-[6px] px-[10px] text-[28px] font-bold whitespace-nowrap text-[#292a2e] ${c.status === "DONE" ? "bg-[#bddb7f]" : "bg-[#9ab5f1]"}`}>
                      {c.status}<Icon className="size-[20px]" sw={3.2}><path d="m2 5 6 6 6-6" /></Icon>
                    </button>
                  </td>
                </tr>
              ))}
            </tbody>
          </table>
          <div className="flex h-[38px] items-center bg-[#fcfcfc] px-[8px]">
            <Arrow dir="left" />
            <div className="flex-1 px-[13px]"><div className="h-[22px] w-[89%] rounded-full bg-[#8b8b8b]" /></div>
            <Arrow dir="right" />
          </div>
        </div>
        <button className="mt-[36px] flex h-[50px] items-center gap-[15px] pl-[30px] font-semibold"><Icon><path d="M9 13.8H2c-.7 0-1.2-.5-1.2-1.2V3c0-.7.5-1.2 1.2-1.2h12c.7 0 1.2.5 1.2 1.2v5M5.2 7.2l2.4 2.6L11 5.2M12.6 9.6v6M9.6 12.6h6" /></Icon>Add child work item</button>
        <h3 className="mt-[65px] text-[37px] leading-[50px] font-semibold text-[#292a2e]">Connected work items</h3>
        <button className="mt-[25px] block leading-[50px] text-[#6b6e76]">Add connected work item</button>
      </div>
      <div className="flex w-[38px] flex-col items-center bg-[#fcfcfc] py-[8px]">
        <Arrow dir="up" />
        <div className="flex-1 pt-[82px]"><div className="h-[478px] w-[22px] rounded-full bg-[#8b8b8b]" /></div>
        <Arrow dir="down" />
      </div>
    </aside>
  );
}

function Chrome() {
  return (
    <svg viewBox="0 0 60 60" className="size-[60px]" aria-hidden="true">
      <path d="M30 15h26A30 30 0 0 1 30 60l13-22.5z" fill="#fcc31e" /><path d="M30 30 43 37.5 30 60A30 30 0 0 1 4 15l13 22.5z" fill="#249745" />
      <path d="M4 15a30 30 0 0 1 52 0H30L17 37.5z" fill="#e33b2e" />
      <circle cx="30" cy="30" r="15" fill="#fff" /><circle cx="30" cy="30" r="11.8" fill="#2d7bea" />
    </svg>
  );
}

function Badged({ badge }: { badge: React.ReactNode }) {
  return <span className="relative block"><Chrome /><span className="absolute -top-[12px] left-[32px]">{badge}</span></span>;
}

function TaskApp({ label, running, active, children: icon }: { label: string; running?: boolean; active?: boolean; children: React.ReactNode }) {
  return (
    <button aria-label={label} className="relative flex h-[120px] w-[110px] items-center justify-center">
      {active && <span className="absolute inset-x-[6px] inset-y-[10px] rounded-[10px] border-2 border-[#bfdfe1] bg-[#e6f8fb]" />}
      <span className="relative">{icon}</span>
      {running && <span className="absolute bottom-[13px] h-[8px] w-[15px] rounded-full bg-[#748b8d]" />}
      {active && <span className="absolute bottom-[13px] h-[8px] w-[40px] rounded-full bg-[#258296]" />}
    </button>
  );
}

function Taskbar() {
  return (
    <footer className="grid h-[120px] grid-cols-[1fr_auto_1fr] items-center bg-[linear-gradient(90deg,#daeee2,#cff2ee_12%,#c8f4f2_50%,#ccf0f1_78%,#c9f2ef)] text-[29px] text-[#1b1b1b] shadow-[inset_0_3px_0_#a9bfbf]">
      <button className="flex items-center pl-[45px] text-left">
        <svg viewBox="0 0 72 76" className="h-[76px] w-[72px]" aria-hidden="true">
          <defs><linearGradient id="cloud" x1="0" y1="0" x2="0" y2="1"><stop offset="0" stopColor="#8fb2f3" /><stop offset=".8" stopColor="#d3e1f8" /><stop offset="1" stopColor="#88a8ea" /></linearGradient></defs>
          <circle cx="46" cy="34" r="15" fill="#ee8a1c" />
          <path d="M17 64C-2 64-1 43 13 43c1-17 27-20 31-4 16-4 23 12 14 20-3 4-8 5-13 5z" fill="url(#cloud)" />
          <circle cx="51" cy="20" r="20" fill="#c42b1c" /><text x="51" y="30" textAnchor="middle" fontSize="28" fill="#fff">2</text>
        </svg>
        <span className="ml-[8px] flex flex-col leading-[40px]"><span>29°C</span><span className="text-[#4f5f5f]">Mostly cloudy</span></span>
      </button>
      <div className="flex items-center">
        <TaskApp label="Start">
          <svg viewBox="0 0 58 58" className="size-[58px]" aria-hidden="true"><defs><linearGradient id="win" x1="0" y1="0" x2="1" y2="1"><stop offset="0" stopColor="#4dd0ff" /><stop offset="1" stopColor="#0070d0" /></linearGradient></defs><path fill="url(#win)" d="M3 0h24.5v27.5H0V3q0-3 3-3zM30.5 0H55q3 0 3 3v24.5H30.5zM0 30.5h27.5V58H3q-3 0-3-3zM30.5 30.5H58V55q0 3-3 3H30.5z" /></svg>
        </TaskApp>
        <label className="mr-[7px] ml-[10px] flex h-[80px] w-[545px] items-center rounded-full border-2 border-b-[3px] border-[#b5dcdb] bg-[#eefbfb] pl-[26px]">
          <Search className="size-[38px]" />
          <input aria-label="Search Windows" placeholder="Search" className="ml-[25px] w-[400px] text-[33px] outline-none placeholder:text-[#5b6666]" />
        </label>
        <TaskApp label="Copilot">
          <svg viewBox="0 0 60 60" className="size-[60px]" aria-hidden="true">
            <defs><linearGradient id="cpA" x1="0" y1="0" x2="0" y2="1"><stop offset="0" stopColor="#25b8f5" /><stop offset=".3" stopColor="#128fe0" /><stop offset=".65" stopColor="#4fa877" /><stop offset="1" stopColor="#f5c60a" /></linearGradient><linearGradient id="cpB" x1="0" y1="0" x2="0" y2="1"><stop offset="0" stopColor="#a14bf0" /><stop offset=".5" stopColor="#f0569b" /><stop offset="1" stopColor="#ffb45a" /></linearGradient></defs>
            <path d="M28 3h10c5 0 6 4 9 15h-9c-5 0-6 3-8 8z" fill="#1b3fc9" /><path d="M32 57H22c-5 0-5-4-8-15h9c4 0 6-3 7-8z" fill="#ef4f3c" />
            <path d="M17 3h20c-5 1-5 5-7 12l-6 20c-2 5-4 7-8 7H6c-7 0-7-8-5-15L6 11c2-6 5-8 11-8z" fill="url(#cpA)" />
            <path d="M43 57H24c5-1 5-5 7-12l5-20c2-5 4-7 8-7h10c7 0 7 8 5 15l-5 16c-2 6-5 8-11 8z" fill="url(#cpB)" />
          </svg>
        </TaskApp>
        <TaskApp label="File Explorer" running>
          <svg viewBox="0 0 60 60" className="size-[60px]" aria-hidden="true"><path d="M2 4h16q2 0 4 3l3 5v3H0V6q0-2 2-2z" fill="#d99a00" /><path d="M0 14h18l5-4h35q2 0 2 2v42q0 3-3 3H3q-3 0-3-3z" fill="#ffcf4a" /><path d="M10 57V47q0-7 6-7h28q6 0 6 7v10z" fill="#0c6bb8" /><path d="M18 48.500h24" stroke="#083f73" strokeWidth="2.500" /></svg>
        </TaskApp>
        <TaskApp label="To Do">
          <svg viewBox="0 0 60 60" className="size-[60px]" aria-hidden="true"><path d="M1 28 10 19q1.500-1 3 0l11 12-10 12L1 32q-1.500-2 0-4z" fill="#1d5dc0" /><path d="M13 42 47 7q1.500-1 3 0l9 10q1.500 1.500 0 3.500L25.500 53q-1.500 1-3 0z" fill="#3fa2ee" /></svg>
        </TaskApp>
        <TaskApp label="Instagram">
          <svg viewBox="0 0 60 60" className="size-[60px]" aria-hidden="true"><defs><radialGradient id="ig" cx=".3" cy="1.050" r="1.150"><stop offset="0" stopColor="#ffd66b" /><stop offset=".3" stopColor="#fa7e35" /><stop offset=".6" stopColor="#dd2a6f" /><stop offset=".85" stopColor="#a930b4" /><stop offset="1" stopColor="#4f5bd5" /></radialGradient></defs><rect width="60" height="60" rx="12" fill="url(#ig)" /><g fill="none" stroke="#fff" strokeWidth="4.500"><rect x="10" y="10" width="40" height="40" rx="11" /><circle cx="30" cy="30" r="9.500" /></g><circle cx="42" cy="18.500" r="2.800" fill="#fff" /></svg>
        </TaskApp>
        <TaskApp label="Zalo">
          <svg viewBox="0 0 60 60" className="size-[60px]" aria-hidden="true"><path d="M14 1Q0 4 0 20v20q0 20 20 20h18q12 0 18-10z" fill="#0c63e7" /><path d="M14 1q3-1 8-1h22q16 0 16 16v22q0 16-16 16H24q-8 0-14-2 4-3 0-10-4-8-4-20Q6 8 14 1z" fill="#fff" /><text x="34" y="34" textAnchor="middle" fontSize="20" fontWeight="700" fill="#0c63e7">Zalo</text></svg>
        </TaskApp>
        <TaskApp label="Pinterest"><span className="flex size-[54px] items-center justify-center rounded-full border-2 border-[#eef9f9] bg-[#c01f27]"><FaPinterestP className="size-[42px] text-white" /></span></TaskApp>
        <TaskApp label="Chrome"><Chrome /></TaskApp>
        <TaskApp label="Edge">
          <svg viewBox="0 0 60 60" className="size-[60px]" aria-hidden="true"><defs><linearGradient id="edg" x1="0" y1="0" x2="1" y2="0"><stop offset="0" stopColor="#1a9be0" /><stop offset=".6" stopColor="#2cc3d2" /><stop offset="1" stopColor="#62e05c" /></linearGradient></defs><circle cx="30" cy="30" r="29.500" fill="#0f4f9c" /><path d="M1 24a30 30 0 0 1 59 6c0 8-7 12-14 12-8 0-9-3-7-6 3-6-3-15-15-16C12 19 3 26 1 36q-2-5 0-12z" fill="url(#edg)" /><path d="M1 36C0 25 10 19 24 20c-6 6-7 18 2 26 5 5 14 8 28 3a30 30 0 0 1-14 9C20 63 2 52 1 36z" fill="#1173c7" /><path d="M23 30c0-6 6-8 12-5 5 3 6 8 4 11-2 4-1 6 7 6 5 0 9-2 14-5-1 5-5 10-8 12-15 5-29-6-29-19z" fill="#cdf3f3" /><path d="M24 36c2 9 12 15 31 9a30 30 0 0 1-14 13c-11-2-18-12-17-22z" fill="#114a93" /><rect x="0" y="38" width="29" height="22" rx="2" fill="#cf7a08" /><path d="M10 39v-3h9v3" stroke="#3a3a3a" strokeWidth="2.500" fill="none" /><path d="M0 48h29" stroke="#8e4d06" strokeWidth="2" /><rect x="12" y="47" width="5" height="5" fill="#ffd24a" /></svg>
        </TaskApp>
        <TaskApp label="Chrome, profile D" running><Badged badge={<span className="flex size-[41px] items-center justify-center rounded-full bg-[#0b8577] text-[21px] text-[#d6efec]">D</span>} /></TaskApp>
        <TaskApp label="Visual Studio Code" running>
          <svg viewBox="0 0 60 60" className="size-[60px]" aria-hidden="true"><path d="M1 21 5 16q2-1 4 0l36 30V60L1 24q-1-2 0-3z" fill="#0a7fd0" /><path d="M1 39 5 44q2 1 4 0l36-30V0L1 36q-1 2 0 3z" fill="#0368ae" /><path d="M44 0 58 6q2 1 2 3v42q0 2-2 3L44 60q-2 0-2-2 3-1 3-4V6q0-3-3-4 0-2 2-2z" fill="#29a9f2" /></svg>
        </TaskApp>
        <TaskApp label="Chrome, guest profile" running><Badged badge={<svg viewBox="0 0 41 41" className="size-[41px]"><circle cx="20.5" cy="20.5" r="19.5" fill="#74c4ea" stroke="#5f9dbd" strokeWidth="2" /><path d="M11 14q1-9 8-8 6 1 6 9l3 14q-1 6-8 6t-8-6z" fill="#e9e6f0" /><path d="M13 11h8" stroke="#666" strokeWidth="2.500" /><path d="m27 16 8-9" stroke="#fff" strokeWidth="3" /></svg>} /></TaskApp>
        <TaskApp label="Chrome, profile C" active><Badged badge={<span className="flex size-[41px] items-center justify-center rounded-full bg-[#4f2da6] text-[21px] text-[#d9cff2]">C</span>} /></TaskApp>
      </div>
      <div className="flex items-center justify-end pr-[50px]">
        <button aria-label="Show hidden icons"><Icon className="size-[28px]"><path d="M.8 12 8 4.5l7.2 7.5" /></Icon></button>
        <button aria-label="Network" className="ml-[44px]"><Icon className="size-[44px]" sw={1.2}><path d="M.8 6.3a10.2 10.2 0 0 1 14.4 0M3 8.7a7 7 0 0 1 10 0M5.2 11a4 4 0 0 1 5.6 0" /><circle cx="8" cy="13.2" r=".8" fill="currentColor" /></Icon></button>
        <button aria-label="Volume" className="ml-[16px]"><Icon className="size-[42px]" sw={1.1}><path d="M1 6h2.5L7 2.5v11L3.5 10H1zM9 5.8q1.5 2.2 0 4.4M11 4.2q2.5 3.8 0 7.6" strokeLinejoin="round" /><path d="M13 2.5q3.4 5.5 0 11" className="text-[#9ab5b6]" stroke="currentColor" /></Icon></button>
        <button aria-label="Battery" className="ml-[18px]"><Icon className="size-[42px]" sw={1.2}><path d="M6 4.2h6q2 0 2 2v5q0 2-2 2H3q-2 0-2-2V9.5" /><path d="M6.5 6H12v5.5H2.8V9.5h3z" fill="currentColor" stroke="none" /><path d="M14.6 7.2h1.2v3h-1.200zM3.2 1 .6 6h2L1.5 9.3 5.4 4.7H3.5L5 1z" fill="currentColor" stroke="none" /></Icon></button>
        <span className="ml-[40px] text-right leading-[40px]">2:55 CH<br />29/09/2025</span>
      </div>
    </footer>
  );
}

export default function App() {
  return (
    <div className="flex min-h-screen flex-col bg-white font-['Open_Sans','Noto_Sans',sans-serif]">
      <BrowserChrome />
      <TopBar />
      <div className="flex flex-1 items-stretch">
        <Sidebar />
        <Board />
        <DetailPanel />
      </div>
      <Taskbar />
    </div>
  );
}
